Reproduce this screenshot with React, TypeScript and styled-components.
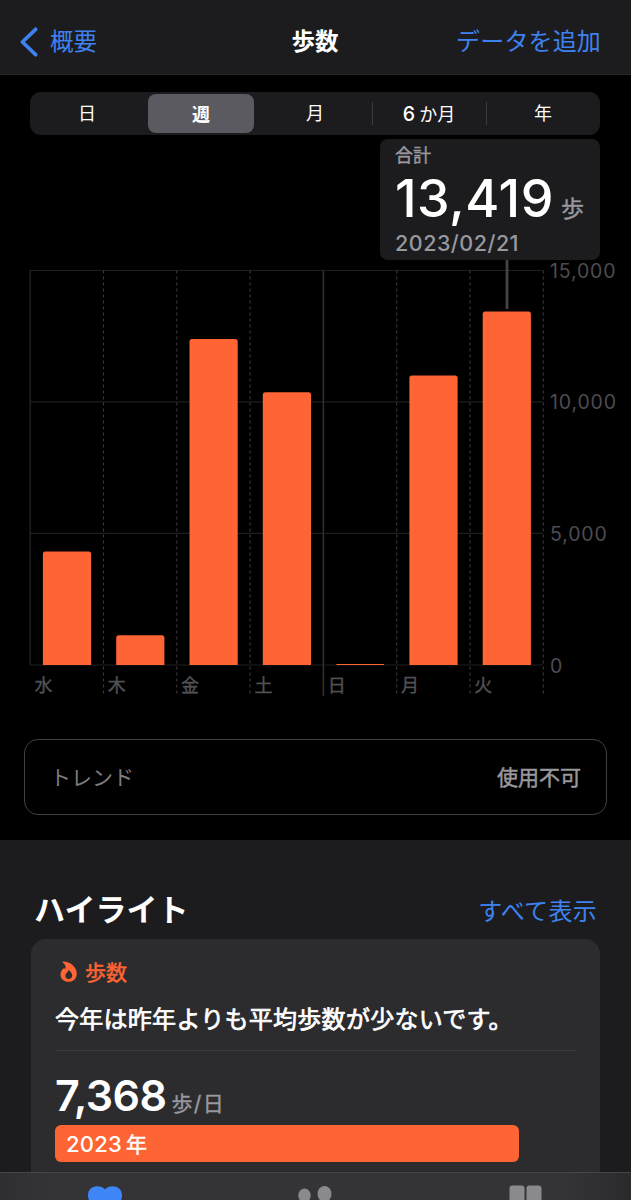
import React from 'react';
import styled, { createGlobalStyle } from 'styled-components';

const GlobalStyle = createGlobalStyle`
  * { box-sizing: border-box; }
  html, body { margin: 0; padding: 0; background: #000; }
  body { font-family: Inter, "Noto Sans CJK JP", sans-serif; color: #fff; overflow: hidden; }
`;

const Screen = styled.div`
  width: 631px;
  height: 1200px;
  position: relative;
  overflow: hidden;
  background: #000;
  display: flex;
  flex-direction: column;
`;

const NavBar = styled.header`
  height: 75px;
  flex: none;
  padding: 10px 30px 0 20px;
  background: #1c1c1e;
  border-bottom: 1px solid #262628;
  display: grid;
  grid-template-columns: 1fr auto 1fr;
  align-items: center;
`;

const NavTitle = styled.h1`
  margin: 0 0 0 9px;
  font-size: 23.5px;
  line-height: 32px;
  font-weight: 700;
`;

const Link = styled.a<{ $size?: number; $end?: boolean; $spacing?: number }>`
  display: flex;
  align-items: center;
  gap: 12px;
  color: #3e82f0;
  font-size: ${(p) => p.$size ?? 24}px;
  letter-spacing: ${(p) => p.$spacing ?? 0}px;
  line-height: 32px;
  white-space: nowrap;
  justify-self: ${(p) => (p.$end ? 'end' : 'start')};
`;

const Segments = styled.div`
  flex: none;
  height: 43px;
  margin: 17px 31px 0 30px;
  border-radius: 11px;
  background: #1c1c1f;
  display: grid;
  grid-template-columns: repeat(5, 1fr);
`;

const Segment = styled.button<{ $active?: boolean; $divided?: boolean }>`
  border: 0;
  padding: ${(p) => (p.$active ? '2px' : '1px')} 0 0;
  margin: ${(p) => (p.$active ? '2px 4px 2px' : '0')};
  border-radius: 8px;
  background: ${(p) =>
    p.$active
      ? '#5b5a60'
      : p.$divided
        ? 'linear-gradient(#3c3c40, #3c3c40) 0 50% / 1px 23px no-repeat'
        : 'transparent'};
  color: #fff;
  font: ${(p) => (p.$active ? 700 : 400)} 18px/36px Inter, 'Noto Sans CJK JP', sans-serif;
`;

const Digit = styled.span`
  font-weight: 500;
  font-size: 19.5px;
  margin-right: 4px;
`;

const ChartArea = styled.section`
  position: relative;
  flex: none;
  height: 570px;
`;

const Chart = styled.svg`
  display: block;
  margin-top: 125px;
`;

const AxisText = styled.text<{ $day?: boolean }>`
  fill: ${(p) => (p.$day ? '#525256' : '#4c4c50')};
  stroke: ${(p) => (p.$day ? '#525256' : 'none')};
  stroke-width: 0.35px;
  font-size: ${(p) => (p.$day ? 18 : 19.5)}px;
  font-weight: 400;
  letter-spacing: ${(p) => (p.$day ? 0 : 0.85)}px;
`;

const Callout = styled.div`
  position: absolute;
  left: 380px;
  top: 4px;
  width: 220px;
  height: 121px;
  padding: 5px 16px 0 15px;
  border-radius: 8px;
  background: #1c1c1e;
  color: #98989e;
`;

const CalloutLabel = styled.div`
  font-size: 18px;
  line-height: 24px;
  -webkit-text-stroke: 0.4px currentColor;
`;

const CalloutValue = styled.div`
  display: flex;
  align-items: baseline;
  justify-content: space-between;
  height: 62px;
  line-height: 62px;
`;

const BigNumber = styled.span`
  color: #fff;
  font-size: 52px;
  font-weight: 500;
  letter-spacing: 0.5px;
`;

const Unit = styled.span<{ $size: number; $spacing?: number }>`
  color: #98989e;
  font-size: ${(p) => p.$size}px;
  letter-spacing: ${(p) => p.$spacing ?? 0}px;
  -webkit-text-stroke: 0.4px currentColor;
`;

const CalloutDate = styled.div`
  font-size: 21.5px;
  line-height: 27px;
  font-weight: 500;
  letter-spacing: 0.5px;
`;

const Trend = styled.div`
  flex: none;
  height: 76px;
  margin: 34px 24px 0;
  padding: 0 25px 2px;
  border: 1.5px solid #3f3f41;
  border-radius: 14px;
  display: flex;
  align-items: center;
  justify-content: space-between;
  font-size: 21px;
`;

const TrendName = styled.span`
  color: #7c7c80;
`;

const TrendStatus = styled.span`
  color: #98989d;
  -webkit-text-stroke: 0.5px currentColor;
`;

const Highlights = styled.section`
  flex: 1;
  margin-top: 25px;
  background: #1c1c1e;
`;

const SectionHead = styled.div`
  height: 99px;
  padding: 48px 34px 0;
  display: flex;
  align-items: flex-start;
  justify-content: space-between;
`;

const SectionTitle = styled.h2`
  margin: 0;
  font-size: 31px;
  line-height: 44px;
  font-weight: 700;
`;

const SectionLink = styled(Link)`
  margin-top: 8px;
`;

const Card = styled.article`
  margin: 0 31px;
  height: 300px;
  padding: 18px 24px 0;
  border-radius: 15px;
  background: #2c2c2e;
`;

const CardTag = styled.div`
  display: flex;
  align-items: center;
  gap: 7px;
  height: 28px;
  padding-left: 5px;
  color: #ff6534;
  font-size: 21px;
  -webkit-text-stroke: 0.5px currentColor;
`;

const CardText = styled.p`
  margin: 19px 0 0;
  height: 47px;
  border-bottom: 1.5px solid #3c3c3e;
  font-size: 24px;
  letter-spacing: 0.28px;
  line-height: 32px;
  white-space: nowrap;
  -webkit-text-stroke: 0.7px currentColor;
`;

const Average = styled.div`
  display: flex;
  align-items: baseline;
  gap: 5px;
  height: 74px;
  line-height: 88px;
`;

const AverageNumber = styled.span`
  font-size: 43px;
  font-weight: 600;
  letter-spacing: -0.6px;
`;

const YearBar = styled.div`
  width: 464px;
  height: 37px;
  padding-left: 11px;
  border-radius: 6px;
  background: #ff6534;
  font-size: 22px;
  line-height: 38px;
  font-weight: 500;
  letter-spacing: 0.2px;
`;

const YearSuffix = styled.span`
  margin-left: 4px;
  font-size: 21px;
  font-weight: 400;
  -webkit-text-stroke: 0.5px currentColor;
`;

const TabBar = styled.nav`
  position: absolute;
  left: 0;
  right: 0;
  bottom: 0;
  height: 28px;
  border-top: 1px solid #454547;
  background: linear-gradient(90deg, #2f2f31, #343436 8%, #343436 90%, #2a2a2c);
  display: grid;
  grid-template-columns: repeat(3, 1fr);
  justify-items: center;
`;

const days = [
  { name: '水', top: 551.5 },
  { name: '木', top: 635.3 },
  { name: '金', top: 339 },
  { name: '土', top: 392.3 },
  { name: '日', top: 664 },
  { name: '月', top: 375.5 },
  { name: '火', top: 311.5 },
];
const step = 73.3;
const left = 30;
const base = 665;
const scale = [
  { y: 270.5, label: '15,000' },
  { y: 401.8, label: '10,000' },
  { y: 533.3, label: '5,000' },
  { y: 665, label: '0' },
];

function barPath(x: number, top: number) {
  const r = Math.min(2.5, base - top);
  return `M${x} ${base}V${top + r}q0 ${-r} ${r} ${-r}h${48.2 - 2 * r}q${r} 0 ${r} ${r}V${base}z`;
}

function StepsChart() {
  return (
    <Chart width="631" height="445" viewBox="0 260 631 445">
      {scale.map((s) => (
        <React.Fragment key={s.label}>
          <path d={`M30 ${s.y}H543`} stroke="#1f1f21" strokeWidth="1.2" />
          <AxisText x="550" y={s.y + 7.5}>{s.label}</AxisText>
        </React.Fragment>
      ))}
      <path d="M30.2 270V665" stroke="#222224" strokeWidth="1.4" />
      {[1, 2, 3, 4, 5, 6, 7].map((i) => (
        <path
          key={i}
          d={`M${left + i * step + 0.2} 270.5V696`}
          stroke={i === 4 ? '#303032' : '#3a3a3c'}
          strokeWidth={i === 4 ? 1.5 : 1.1}
          strokeDasharray={i === 4 ? undefined : '3 3'}
        />
      ))}
      {days.map((d, i) => (
        <React.Fragment key={d.name}>
          <path d={barPath(left + i * step + 12.9, d.top)} fill="#ff6534" />
          <AxisText $day x={left + i * step + 4.5} y="691.5">{d.name}</AxisText>
        </React.Fragment>
      ))}
      <path d="M507 260V309" stroke="#444447" strokeWidth="2.8" />
    </Chart>
  );
}

export default function App() {
  return (
    <Screen>
      <GlobalStyle />
      <NavBar>
        <Link $size={23.5}>
          <svg width="18" height="30" viewBox="0 0 18 30" fill="none">
            <path d="M15.6 2.3L2.4 15L15.6 27.7" stroke="#3e82f0" strokeWidth="3.7" strokeLinecap="round" strokeLinejoin="round" />
          </svg>
          概要
        </Link>
        <NavTitle>歩数</NavTitle>
        <Link $end $spacing={0.15}>データを追加</Link>
      </NavBar>

      <Segments>
        <Segment>日</Segment>
        <Segment $active>週</Segment>
        <Segment>月</Segment>
        <Segment $divided><Digit>6</Digit>か月</Segment>
        <Segment $divided>年</Segment>
      </Segments>

      <ChartArea>
        <StepsChart />
        <Callout>
          <CalloutLabel>合計</CalloutLabel>
          <CalloutValue>
            <BigNumber>13,419</BigNumber>
            <Unit $size={23}>歩</Unit>
          </CalloutValue>
          <CalloutDate>2023/02/21</CalloutDate>
        </Callout>
      </ChartArea>

      <Trend>
        <TrendName>トレンド</TrendName>
        <TrendStatus>使用不可</TrendStatus>
      </Trend>

      <Highlights>
        <SectionHead>
          <SectionTitle>ハイライト</SectionTitle>
          <SectionLink $spacing={0.3}>すべて表示</SectionLink>
        </SectionHead>
        <Card>
          <CardTag>
            <svg width="18" height="21" viewBox="0.4 0 17 20.5" preserveAspectRatio="none">
              <path
                fill="#ff6534"
                stroke="none"
                fillRule="evenodd"
                d="M3.4 .6C9.5 .4 16.2 5.4 16.2 12.4C16.2 17.2 12.9 20.3 8.5 20.3C4 20.3 .9 17.4 .9 13.2C.9 10.6 2 8 3.8 7.2C4.5 6.9 5 7.4 5.3 8.1C6.3 5.6 5.4 3.2 3.2 1.6C2.7 1.2 2.8 .7 3.4 .6ZM8.1 8.8C8.3 11.2 5.5 11.6 5.5 14.3C5.5 16.3 6.8 17.5 8.6 17.5C10.6 17.5 11.9 16.2 11.9 14.2C11.9 11.7 10.2 9.8 8.1 8.8Z"
              />
            </svg>
            歩数
          </CardTag>
          <CardText>今年は昨年よりも平均歩数が少ないです。</CardText>
          <Average>
            <AverageNumber>7,368</AverageNumber>
            <Unit $size={21} $spacing={1.4}>歩/日</Unit>
          </Average>
          <YearBar>2023<YearSuffix>年</YearSuffix></YearBar>
        </Card>
      </Highlights>

      <TabBar>
        <svg width="36" height="27" viewBox="87 1173 36 27">
          <path d="M105 1189.5C101 1184.5 88 1184.5 88 1195.5C88 1203 96 1211 105 1217C114 1211 122 1203 122 1195.5C122 1184.5 109 1184.5 105 1189.5Z" fill="#3e86f7" />
        </svg>
        <svg width="36" height="27" viewBox="297 1173 36 27">
          <ellipse cx="304.5" cy="1195.5" rx="6.2" ry="7" fill="#8a8a8d" />
          <ellipse cx="324.5" cy="1194" rx="7" ry="8" fill="#8a8a8d" />
        </svg>
        <svg width="34" height="27" viewBox="508 1173 34 27">
          <rect x="508.5" y="1185.5" width="15" height="20" rx="3" fill="#8a8a8d" />
          <rect x="525.5" y="1185.5" width="15" height="20" rx="3" fill="#8a8a8d" />
        </svg>
      </TabBar>
    </Screen>
  );
}
